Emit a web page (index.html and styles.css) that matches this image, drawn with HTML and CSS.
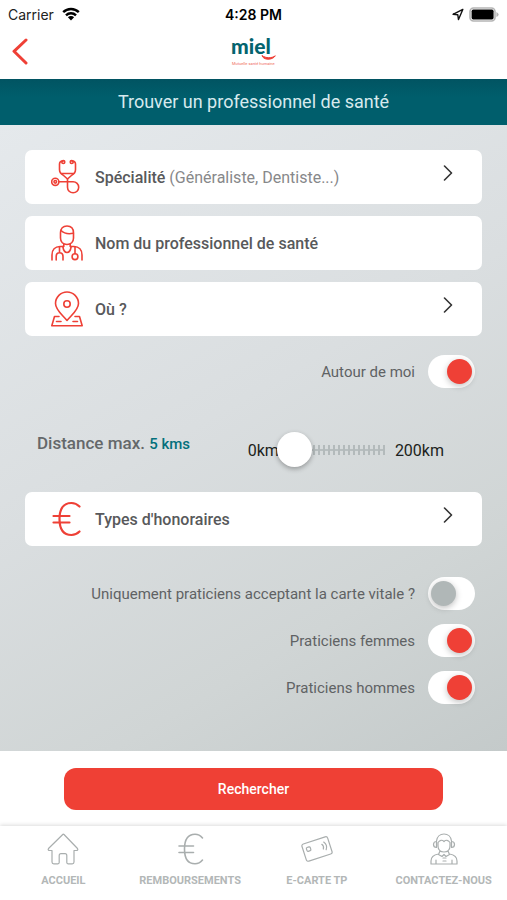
FILE: index.html
```html
<!DOCTYPE html>
<html lang="fr">
<head>
<meta charset="utf-8">
<meta name="viewport" content="width=device-width, initial-scale=1">
<title>Trouver un professionnel de santé</title>
<link rel="stylesheet" href="styles.css">
</head>
<body>
<div class="app">
  <div class="status">
    <div class="status-left">
      <span>Carrier</span>
      <svg width="18" height="14" viewBox="0 0 18 14"><g fill="none" stroke="#000" stroke-width="2.4"><path d="M1.200 5.200a11 11 0 0 1 15.600 0"/><path d="M4 8.300a7 7 0 0 1 10 0"/></g><path d="M9 13.600l-3.100-3.300a4.400 4.400 0 0 1 6.200 0z"/></svg>
    </div>
    <span class="status-time">4:28 PM</span>
    <div class="status-right">
      <svg width="12" height="13" viewBox="0 0 12 13"><path d="M10.800 1.400L1 6.300l4.800.5.7 4.800z" fill="none" stroke="#111" stroke-width="1.4" stroke-linejoin="round"/></svg>
      <svg width="30" height="15" viewBox="0 0 30 15"><rect x="1" y="1" width="25" height="13" rx="3.5" fill="#fff" stroke="#b5b5b5" stroke-width="1.6"/><rect x="2.6" y="2.6" width="22" height="9.8" rx="1.6"/><path d="M27.400 5v5q2.200-1 2.200-2.500T27.400 5z" fill="#b5b5b5"/></svg>
    </div>
  </div>

  <header class="header">
    <button class="back" type="button" aria-label="Retour">
      <svg width="16" height="27" viewBox="0 0 16 27"><path d="M14 2L2 13.300 14 25" fill="none" stroke="#ef4036" stroke-width="3" stroke-linecap="round" stroke-linejoin="round"/></svg>
    </button>
    <svg class="logo" width="46" height="34" viewBox="0 0 46 34" role="img" aria-label="miel">
      <text class="logo-name" x="0" y="19">miel</text>
      <path d="M31 20.500c1 4.800 10.500 5 13.300.3-3.500 2.600-9.500 2.600-13.300-.3z" fill="#ef4036" stroke="#ef4036" stroke-width="1" stroke-linejoin="round"/>
      <text class="logo-tag" x="1" y="30">Mutuelle santé humaine</text>
    </svg>
  </header>

  <h1 class="title">Trouver un professionnel de santé</h1>

  <form class="form" id="search">
    <div class="cards">
      <button class="card" type="button">
        <svg class="card-icon" viewBox="0 0 32 36"><g class="line"><path d="M12 2.200C9.500 1.800 8.500 3.500 8.500 5v5.500c0 2.500 1.500 4.500 3.500 5.500l4.500 4 4.500-4c2-1 3.500-3 3.500-5.500V5c0-1.500-1-3.200-3.500-2.800"/><circle cx="12.300" cy="3" r="1.500"/><circle cx="20.700" cy="3" r="1.500"/><path d="M10.500 14.500h12M16.500 20v8.200c0 3.200 2.500 5.600 5.600 5.600s5.600-2.400 5.600-5.500-2.500-5.500-5.600-5.500H8"/><circle cx="4.300" cy="22.800" r="3.600"/><circle cx="4.300" cy="22.800" r="1.300"/></g></svg>
        <span class="card-text">Spécialité <span class="hint">(Généraliste, Dentiste...)</span></span>
        <svg class="chevron" viewBox="0 0 10 16"><path d="M1.500 1l7 7-7 7"/></svg>
      </button>
      <label class="card">
        <svg class="card-icon" viewBox="0 0 32 36"><g class="line"><path d="M9.500 8c0-4.500 2.500-7 6.500-7s6.500 2.500 6.500 7v5c0 4-2.700 6.500-6.500 6.500S9.500 17 9.500 13z"/><path d="M10 5.500c3 3 7.500 3.800 12.300 2.800"/><path d="M11.800 21.500c.5 3 2 6 4.200 6s3.700-3 4.200-6M12.800 19v2.500M19.200 19v2.500"/><path d="M11.800 21.500H9c-5 0-8 3.500-8 8.500v5M20.200 21.500H23c5 0 8 3.500 8 8.500v5"/><path d="M8.500 21.700v6M5.200 35v-3.500c0-2.200 1.200-3.700 3.300-3.700s3.500 1.500 3.500 3.700V35M24 21.700v7"/><circle cx="24" cy="31.700" r="2.900"/></g></svg>
        <input class="card-input" type="text" placeholder="Nom du professionnel de santé" aria-label="Nom du professionnel de santé">
      </label>
      <button class="card" type="button">
        <svg class="card-icon" viewBox="0 0 32 36"><g class="line"><path d="M16 29.500C11.500 24 4.500 19 4.500 12.500a11.500 11.500 0 0 1 23 0C27.500 19 20.500 24 16 29.500z"/><circle cx="16" cy="13" r="3.200"/><path d="M8 25.500H3.500L.8 34.800h30.400l-2.700-9.300H24M5.500 30.500h4.500M22 30.500h4.500"/></g></svg>
        <span class="card-text">Où ?</span>
        <svg class="chevron" viewBox="0 0 10 16"><path d="M1.500 1l7 7-7 7"/></svg>
      </button>
    </div>

    <div class="toggles around">
      <label class="toggle-row">Autour de moi <input class="toggle" type="checkbox" checked></label>
    </div>

    <div class="distance">
      <label class="distance-label" for="distance">Distance max. <output class="distance-value" for="distance">5 kms</output></label>
      <div class="range-row">
        <span>0km</span>
        <input class="range" id="distance" type="range" min="0" max="200" value="5">
        <span class="range-max">200km</span>
      </div>
    </div>

    <button class="card" type="button">
      <svg class="card-icon" viewBox="0 0 32 36"><g class="line euro"><path d="M28.500 5.500C26 3 23.500 2 20.500 2 12 2 8.500 8.500 8.500 18s3.500 16 12 16c3 0 5.500-1 8-3.500M2.500 15H18.500M2.500 21.500H18.500"/></g></svg>
      <span class="card-text">Types d'honoraires</span>
      <svg class="chevron" viewBox="0 0 10 16"><path d="M1.500 1l7 7-7 7"/></svg>
    </button>

    <div class="toggles filters">
      <label class="toggle-row">Uniquement praticiens acceptant la carte vitale ? <input class="toggle" type="checkbox"></label>
      <label class="toggle-row">Praticiens femmes <input class="toggle" type="checkbox" checked></label>
      <label class="toggle-row">Praticiens hommes <input class="toggle" type="checkbox" checked></label>
    </div>
  </form>

  <div class="actions">
    <button class="submit" type="submit" form="search">Rechercher</button>
  </div>

  <nav class="tabs">
    <a class="tab" href="#accueil">
      <svg width="32" height="32" viewBox="0 0 32 32"><path d="M16 1.200L1.500 15.500c-.8 1 0 2 1 2H5V29c0 1.200.7 1.800 1.800 1.800H11c.8 0 1.200-.4 1.200-1.200v-7c0-1.400.8-2 1.800-2h4c1 0 1.800.6 1.800 2v7c0 .8.400 1.200 1.200 1.200h4.200c1.100 0 1.800-.6 1.800-1.800V17.500h2.500c1 0 1.800-1 1-2L17 1.500q-.5-.5-1-.3z"/></svg>
      <span>ACCUEIL</span>
    </a>
    <a class="tab" href="#remboursements">
      <svg width="32" height="32" viewBox="0 0 32 32"><path class="thick" d="M28.500 5c-2-2.500-4.500-3.800-7.500-3.800-7.500 0-10.500 6.300-10.500 14.800S13.500 30.800 21 30.800c3 0 5.500-1.300 7.500-3.800M5 13h14.500M5 19.500h14.500"/></svg>
      <span>REMBOURSEMENTS</span>
    </a>
    <a class="tab" href="#carte">
      <svg width="32" height="32" viewBox="0 0 32 32"><g transform="rotate(-18 16 16)"><rect x="2.500" y="7" width="27" height="18" rx="2"/><rect x="6" y="11.500" width="4" height="4" rx="1"/><path d="M22 13q1.800 2.500 0 5M24.500 11.500q3 4 0 8"/></g></svg>
      <span>E-CARTE TP</span>
    </a>
    <a class="tab" href="#contact">
      <svg width="32" height="32" viewBox="0 0 32 32"><path d="M8.500 8C9 4 12 1 16 1s7 3 7.500 7M8.500 8.500c-2 0-3 1.300-3 3s1 3 3 3zM23.500 8.500c2 0 3 1.300 3 3s-1 3-3 3zM10 9.500c2-2.500 4-3 6-1 2-2 4-1.500 6 1V13c0 3.500-2.500 6-6 6s-6-2.500-6-6zM12 18l-1.500 3.500 3.500 2 2-2 2 2 3.500-2L20 18M10.500 21c-5 .8-7.500 3-7.500 7v3h26v-3c0-4-2.500-6.200-7.500-7M15 25h3M15 28h3M8 27v4M24 27v4"/></svg>
      <span>CONTACTEZ-NOUS</span>
    </a>
  </nav>
</div>
</body>
</html>
```
FILE: styles.css
```css
* { box-sizing: border-box; }

body {
  margin: 0;
  font-family: Roboto, "Liberation Sans", sans-serif;
  color: #58595b;
  background: #fff;
}

button, input { font: inherit; color: inherit; }

.app {
  min-height: 100vh;
  display: flex;
  flex-direction: column;
}

/* Status bar */
.status {
  display: grid;
  grid-template-columns: 1fr auto 1fr;
  align-items: center;
  height: 28px;
  padding: 0 8px;
  font: 14px Inter, sans-serif;
  color: #222;
}
.status-left { display: flex; align-items: center; gap: 8px; }
.status-time { font-weight: 600; color: #000; }
.status-right { display: flex; align-items: center; justify-content: flex-end; gap: 5px; }

/* Header */
.header {
  display: grid;
  grid-template-columns: 1fr auto 1fr;
  align-items: center;
  height: 51px;
  padding: 0 12px 4px;
}
.back { justify-self: start; padding: 0; border: 0; background: none; line-height: 0; }
.logo { overflow: visible; }
.logo-name { font: 900 21px Lato, sans-serif; fill: #04646f; }
.logo-tag { font: 4px Roboto, sans-serif; fill: #ef6a60; }

.title {
  margin: 0;
  padding: 0 16px;
  background: linear-gradient(#015462, #005e6c 40%);
  color: #d7eaee;
  font-size: 18px;
  font-weight: 400;
  line-height: 46px;
  text-align: center;
}

/* Search form */
.form {
  flex: 1;
  padding: 25px 25px 0;
  background: linear-gradient(150deg, #e5e9ec 0%, #dadee0 45%, #d0d5d5 75%, #c4caca 100%);
}
.cards { display: grid; gap: 12px; }
.card {
  display: flex;
  align-items: center;
  width: 100%;
  height: 54px;
  padding: 0 29px 0 26px;
  border: 0;
  border-radius: 7px;
  background: #fff;
  font-size: 16px;
  font-weight: 500;
  text-align: left;
}
.card-icon { flex: none; width: 32px; height: 36px; margin-right: 12px; }
.line { fill: none; stroke: #ee4036; stroke-width: 1.6; stroke-linecap: round; stroke-linejoin: round; }
.euro { stroke-width: 2.2; }
.card-text { flex: 1; }
.hint { font-weight: 400; color: #87888a; }
.card-input {
  flex: 1;
  min-width: 0;
  padding: 0;
  border: 0;
  outline: 0;
  background: none;
}
.card-input::placeholder { color: #58595b; opacity: 1; }
.chevron {
  flex: none;
  width: 10px;
  height: 16px;
  margin-bottom: 8px;
  fill: none;
  stroke: #333;
  stroke-width: 1.6;
  stroke-linecap: round;
  stroke-linejoin: round;
}

.toggles { display: grid; gap: 14px; padding-right: 7px; }
.around { margin-top: 19px; }
.filters { margin: 31px 0 47px; }
.toggle-row {
  display: flex;
  align-items: center;
  justify-content: flex-end;
  gap: 13px;
  font-size: 15px;
  color: #5f6264;
}
.toggle {
  appearance: none;
  display: flex;
  align-items: center;
  flex: none;
  width: 47px;
  height: 33px;
  margin: 0;
  padding: 0 3px;
  border-radius: 17px;
  background: #fff;
}
.toggle::before {
  content: "";
  width: 25px;
  height: 25px;
  border-radius: 50%;
  background: #b0b7b7;
  box-shadow: 0 2px 6px rgba(0, 0, 0, .25);
}
.toggle:checked { justify-content: flex-end; }
.toggle:checked::before { background: #ef4036; }

.distance {
  display: flex;
  align-items: center;
  justify-content: space-between;
  height: 104px;
  padding: 20px 38px 0 12px;
}
.distance-label { padding-bottom: 14px; font-size: 17px; font-weight: 500; color: #65686a; }
.distance-value { font-size: 15px; color: #04707c; }
.range-row { display: flex; align-items: center; font-size: 16px; color: #1c1f20; }
.range {
  appearance: none;
  width: 110px;
  height: 36px;
  margin: 0 0 0 -4px;
  background: none;
}
.range::-webkit-slider-runnable-track {
  height: 10px;
  background:
    repeating-linear-gradient(to left, #b3babb 0 2px, transparent 2px 5px) right / 80px 10px no-repeat,
    linear-gradient(#b7bebf, #b7bebf) right / 80px 2px no-repeat;
}
.range::-webkit-slider-thumb {
  appearance: none;
  width: 35px;
  height: 35px;
  margin-top: -13px;
  border-radius: 50%;
  background: #fff;
  box-shadow: 0 2px 5px rgba(0, 0, 0, .3);
}
.range-max { margin-left: 10px; }

/* Search action */
.actions { padding: 17px 64px 16px; }
.submit {
  display: block;
  width: 100%;
  height: 42px;
  border: 0;
  border-radius: 12px;
  background: #ef4035;
  color: #fff;
  font-size: 14px;
  font-weight: 500;
}

/* Bottom navigation */
.tabs {
  display: grid;
  grid-template-columns: repeat(4, 1fr);
  height: 74px;
  padding-top: 7px;
  box-shadow: 0 -1px 4px rgba(0, 0, 0, .14);
}
.tab {
  display: flex;
  flex-direction: column;
  align-items: center;
  gap: 9px;
  color: #b3b7b7;
  font-size: 11px;
  font-weight: 700;
  line-height: 14px;
  text-decoration: none;
  white-space: nowrap;
}
.tab svg { fill: none; stroke: #a9aeae; stroke-width: 1.2; stroke-linecap: round; stroke-linejoin: round; }
.tab .thick { stroke-width: 1.6; }
```
